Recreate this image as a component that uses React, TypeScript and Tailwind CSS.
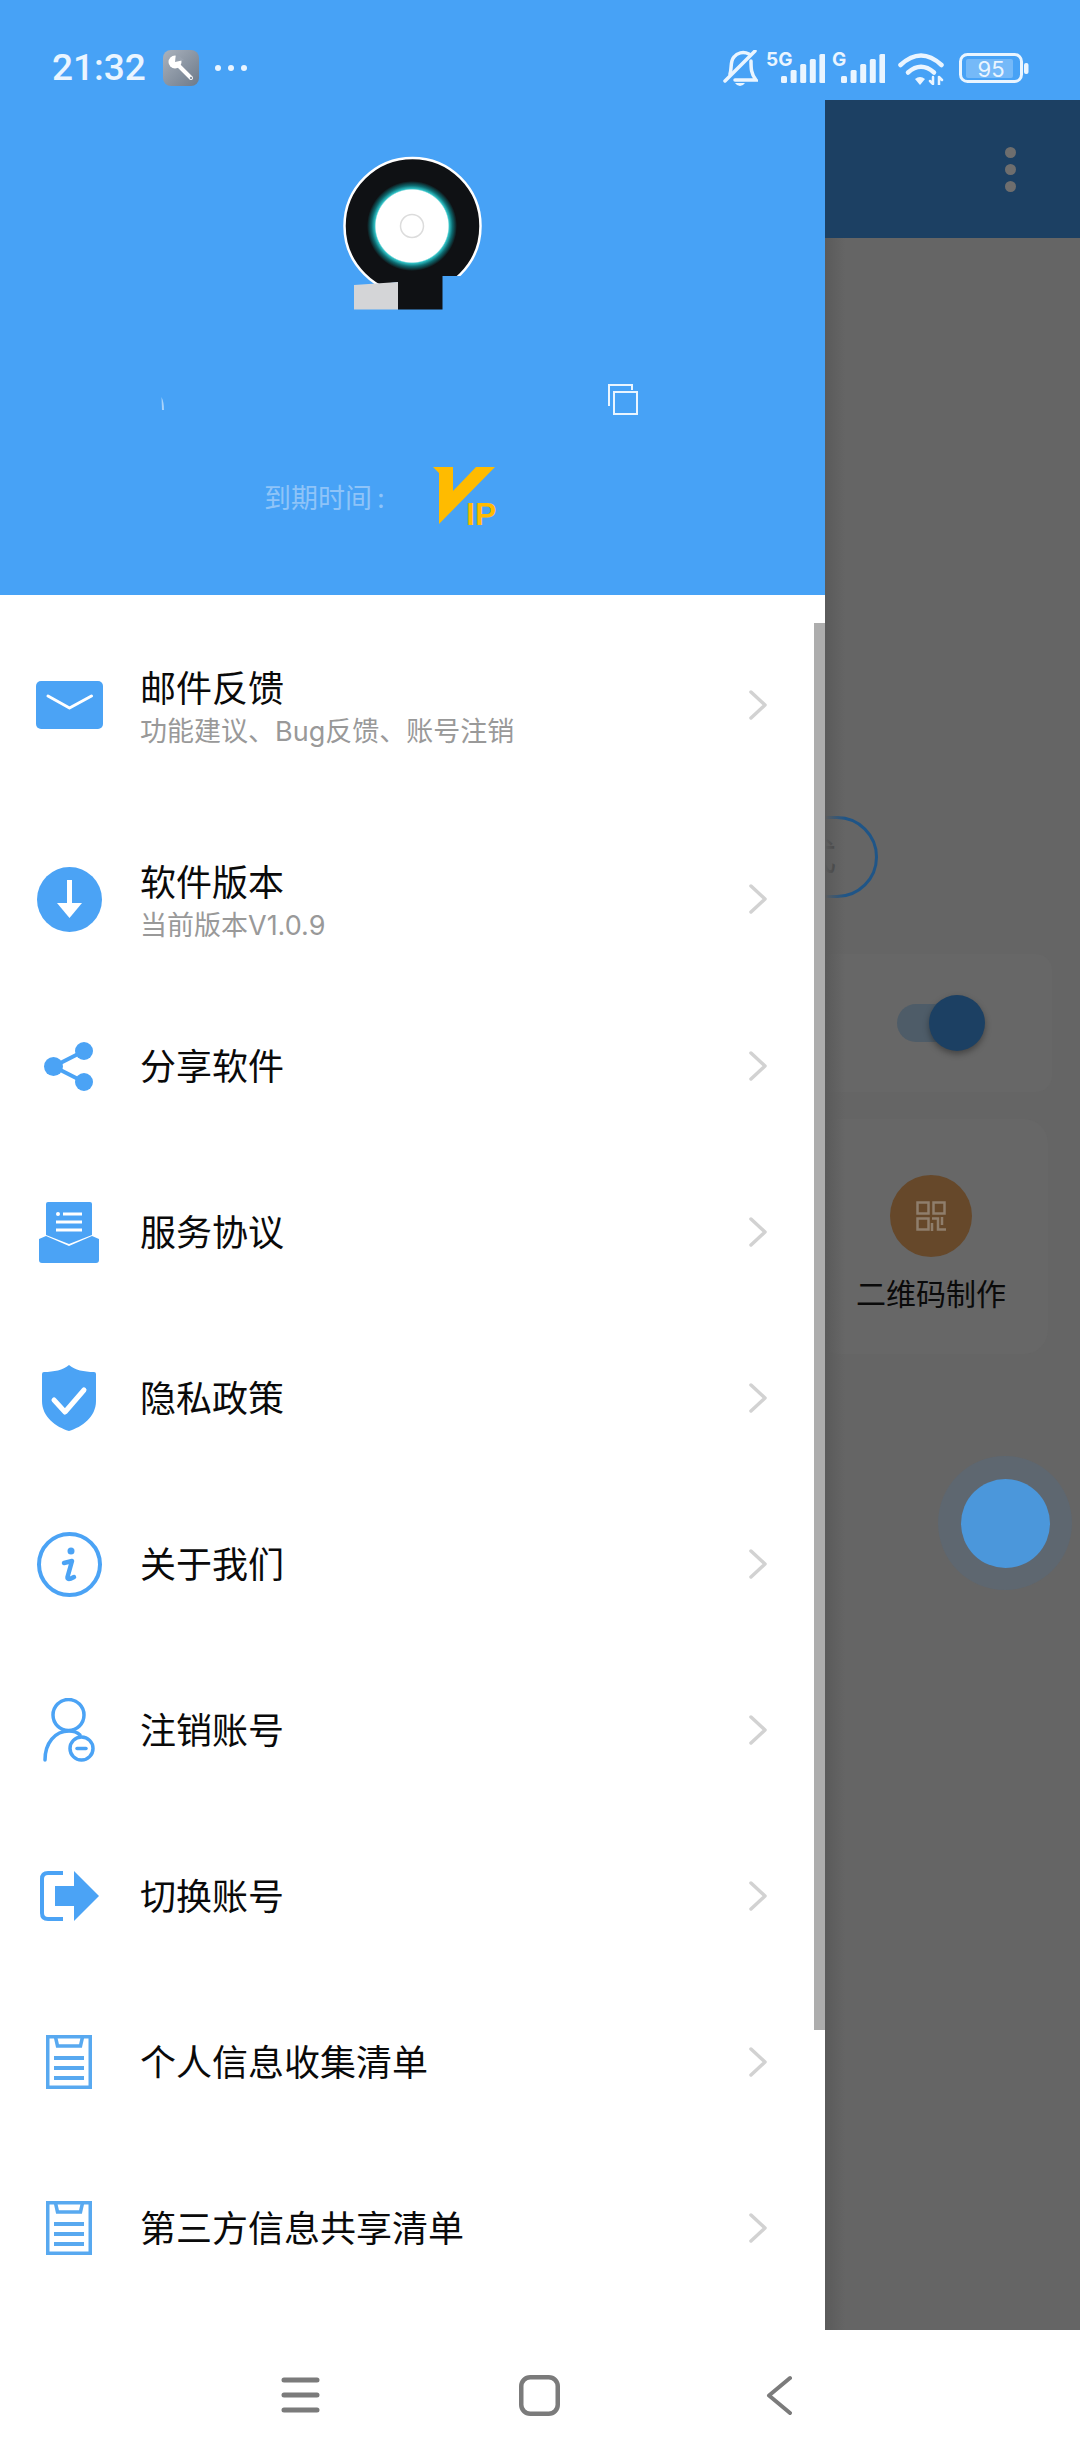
import type { ReactNode } from "react";

const BLUE = "#4BA3F5";

function MailIcon() {
  return (
    <svg width="67" height="48" viewBox="0 0 67 48">
      <rect width="67" height="48" rx="5" fill={BLUE} />
      <path d="M12 15 L33.5 27 L55.5 15" fill="none" stroke="#fff" strokeWidth="3" strokeLinecap="round" strokeLinejoin="round" />
    </svg>
  );
}

function DownloadIcon() {
  return (
    <svg width="65" height="65" viewBox="0 0 65 65">
      <circle cx="32.5" cy="32.5" r="32.5" fill={BLUE} />
      <rect x="30" y="13" width="5" height="24" fill="#fff" />
      <path d="M20 36 H45 L32.5 51 Z" fill="#fff" />
    </svg>
  );
}

function ShareIcon() {
  return (
    <svg width="50" height="49" viewBox="0 0 50 49">
      <path d="M9.5 24.5 L40 9 M9.5 24.5 L40 40" stroke={BLUE} strokeWidth="4" fill="none" />
      <circle cx="9.5" cy="24.5" r="9.5" fill={BLUE} />
      <circle cx="40" cy="9" r="9" fill={BLUE} />
      <circle cx="40" cy="40" r="9" fill={BLUE} />
    </svg>
  );
}

function DocIcon() {
  return (
    <svg width="60" height="61" viewBox="0 0 60 61">
      <path d="M9 0 H51 Q53 0 53 2 V33 L30 42 L7 33 V2 Q7 0 9 0 Z" fill={BLUE} />
      <path d="M0 37 L7 34 L30 44 L53 34 L60 37 V58 Q60 61 57 61 H3 Q0 61 0 58 Z" fill={BLUE} />
      <circle cx="19" cy="12" r="2" fill="#fff" />
      <path d="M24 12 H43 M17 20 H43 M17 28 H43" stroke="#fff" strokeWidth="3" />
    </svg>
  );
}

function ShieldIcon() {
  return (
    <svg width="54" height="66" viewBox="0 0 54 66">
      <path d="M27 0 C33 5 42 7 52 7 Q54 7 54 9 L54 36 C54 52 40 62 27 66 C14 62 0 52 0 36 L0 9 Q0 7 2 7 C12 7 21 5 27 0 Z" fill={BLUE} />
      <path d="M12 35 L23 47 L42 25" fill="none" stroke="#fff" strokeWidth="5" strokeLinecap="round" strokeLinejoin="round" />
    </svg>
  );
}

function InfoIcon() {
  return (
    <svg width="65" height="65" viewBox="0 0 65 65">
      <circle cx="32.5" cy="32.5" r="30.5" fill="none" stroke={BLUE} strokeWidth="4" />
      <circle cx="34" cy="19" r="3.5" fill={BLUE} />
      <path d="M27 31 L35 29 L30.5 45 Q30 49 37 45" fill="none" stroke={BLUE} strokeWidth="4.5" strokeLinejoin="round" strokeLinecap="round" />
    </svg>
  );
}

function UserMinusIcon() {
  return (
    <svg width="52" height="64" viewBox="0 0 52 64" fill="none" stroke={BLUE} strokeWidth="3.5" strokeLinecap="round">
      <circle cx="25.5" cy="17" r="15.5" />
      <path d="M2 62 C2 45 12 33 26 33 C31 33 34 34 37 37" />
      <circle cx="38.5" cy="50.5" r="11.5" />
      <path d="M34 50.5 H43" />
    </svg>
  );
}

function SwitchIcon() {
  return (
    <svg width="59" height="50" viewBox="0 0 59 50">
      <path d="M23 2 H8 Q2 2 2 8 V42 Q2 48 8 48 H23" fill="none" stroke={BLUE} strokeWidth="4" />
      <path d="M15 15 H34 V0 L59 25 L34 50 V35 H15 Z" fill={BLUE} />
    </svg>
  );
}

function ListIcon() {
  return (
    <svg width="46" height="54" viewBox="0 0 46 54" fill="none" stroke="#58A9F0">
      <rect x="1.75" y="1.75" width="42.5" height="50.5" strokeWidth="3.5" />
      <path d="M9.5 2 L11.5 11 H34.5 L36.5 2" strokeWidth="3.5" />
      <path d="M8 23 H38 M8 33 H38 M8 43 H38" strokeWidth="4" />
    </svg>
  );
}

function Chevron() {
  return (
    <svg width="18" height="30" viewBox="0 0 18 30" className="shrink-0">
      <path d="M2 2 L16 15 L2 28" fill="none" stroke="#D2D2D2" strokeWidth="3.5" strokeLinecap="round" strokeLinejoin="round" />
    </svg>
  );
}

function WrenchBadge() {
  return (
    <div className="flex h-9 w-9 items-center justify-center rounded-lg bg-linear-to-br from-[#aab2bd] to-[#6d7a8a]">
      <svg width="28" height="28" viewBox="0 0 28 28">
        <path d="M12 12 L24 24" stroke="#fff" strokeWidth="4" strokeLinecap="round" />
        <circle cx="8" cy="8" r="6.5" fill="#fff" />
        <path d="M8 8 L9 -1 L17 6 Z" fill="#98a2af" />
        <circle cx="24" cy="24" r="1.2" fill="#8b95a2" />
      </svg>
    </div>
  );
}

function BellOff() {
  return (
    <svg width="35" height="37" viewBox="0 0 35 37" fill="none" stroke="#EAF5FF" strokeWidth="3.5" strokeLinecap="round">
      <path d="M7 24 C9 18 7 11 11 7 C14 3 20 1 26 4" />
      <path d="M28 11 C28 18 28 24 33 30 H12" />
      <path d="M32 1 L2 31" />
      <path d="M12 33 H22 Q20 36 17 36 Q14 36 12 33 Z" fill="#EAF5FF" stroke="none" />
    </svg>
  );
}

function SignalBars({ label, wrapClass, barsClass }: { label: string; wrapClass: string; barsClass: string }) {
  return (
    <div className={`relative flex h-[31px] items-end ${wrapClass}`}>
      <span className="absolute left-0 top-[-2px] text-[19px] font-bold leading-none text-[#EAF5FF]">{label}</span>
      <svg width="44" height="29" viewBox="0 0 44 29" className={barsClass}>
        {[7, 13, 19, 24, 29].map((h, i) => (
          <rect key={i} x={i * 9.6} y={29 - h} width="6" height={h} rx="1.5" fill="#EAF5FF" />
        ))}
      </svg>
    </div>
  );
}

function Wifi() {
  return (
    <svg width="46" height="33" viewBox="0 0 46 33" fill="none" stroke="#EAF5FF" strokeLinecap="round">
      <path d="M2.5 13 Q23 -6 43.5 13" strokeWidth="4.5" />
      <path d="M10 20.5 Q23 9 36 20.5" strokeWidth="4.5" />
      <path d="M17 27 L22 33 L27 27 Q22 23 17 27 Z" fill="#EAF5FF" stroke="none" />
      <path d="M35 25 V32 M32 29 L35 32 M41 33 V25 M41 25 L44 28" strokeWidth="2.5" />
    </svg>
  );
}

function Battery() {
  return (
    <div className="relative h-[30px] w-[70px]">
      <svg width="70" height="30" viewBox="0 0 70 30">
        <rect x="1.5" y="1.5" width="61" height="27" rx="7" fill="none" stroke="#EAF5FF" strokeWidth="3" />
        <rect x="7" y="6" width="47" height="19" rx="2" fill="#fff" fillOpacity="0.25" />
        <rect x="65" y="10" width="4.5" height="11" rx="2" fill="#EAF5FF" />
      </svg>
      <span className="absolute left-0 top-[5px] w-[64px] text-center text-[22px] leading-[22px] text-[#EAF5FF]">95</span>
    </div>
  );
}

function Avatar() {
  return (
    <svg width="145" height="155" viewBox="0 0 145 155" className="shrink-0">
      <defs>
        <radialGradient id="discGlow">
          <stop offset="0.8" stopColor="#ffffff" />
          <stop offset="0.83" stopColor="#2fc0c4" />
          <stop offset="0.9" stopColor="#0d6a70" />
          <stop offset="1" stopColor="#0f1114" />
        </radialGradient>
      </defs>
      <circle cx="72.5" cy="71" r="68" fill="#0f1114" stroke="#fff" strokeWidth="2.5" />
      <circle cx="72" cy="71" r="45" fill="url(#discGlow)" />
      <circle cx="72" cy="71" r="11.5" fill="none" stroke="#dcdcdc" strokeWidth="1.5" />
      <path d="M0 130 L35 130 L58 127 V155 H0 Z M102 121 H145 V155 H102 Z" fill="#47A2F6" />
      <rect x="58" y="121" width="44.5" height="33.5" fill="#0f1114" />
      <path d="M14 130 L58 127 V154.5 H14 Z" fill="#d4d5d7" />
    </svg>
  );
}

function VipLogo() {
  return (
    <div className="relative h-[58px] w-[64px] shrink-0">
      <svg width="64" height="58" viewBox="0 0 64 58">
        <path d="M0 0 H20 V24 L43 0 H62 L6 57 V6 Z" fill="#FFBB00" />
      </svg>
      <span className="absolute left-[33px] top-[31px] font-['Liberation_Sans',sans-serif] text-[32px] font-bold leading-none text-[#FFBB00]">
        IP
      </span>
    </div>
  );
}

const rows: { icon: ReactNode; title: string; sub?: string; rowClass: string }[] = [
  { icon: <MailIcon />, title: "邮件反馈", sub: "功能建议、Bug反馈、账号注销", rowClass: "h-[220px]" },
  { icon: <DownloadIcon />, title: "软件版本", sub: "当前版本V1.0.9", rowClass: "h-[168px]" },
  { icon: <ShareIcon />, title: "分享软件", rowClass: "h-[166px]" },
  { icon: <DocIcon />, title: "服务协议", rowClass: "h-[166px]" },
  { icon: <ShieldIcon />, title: "隐私政策", rowClass: "h-[166px]" },
  { icon: <InfoIcon />, title: "关于我们", rowClass: "h-[166px]" },
  { icon: <UserMinusIcon />, title: "注销账号", rowClass: "h-[166px]" },
  { icon: <SwitchIcon />, title: "切换账号", rowClass: "h-[166px]" },
  { icon: <ListIcon />, title: "个人信息收集清单", rowClass: "h-[166px]" },
  { icon: <ListIcon />, title: "第三方信息共享清单", rowClass: "h-[166px]" },
];

export default function App() {
  return (
    <div className="flex h-[2460px] w-[1080px] flex-col overflow-hidden bg-white font-['Inter','Noto_Sans_CJK_SC',sans-serif]">
      {/* status bar */}
      <div className="flex h-[100px] shrink-0 items-start justify-between bg-[#47A2F6] pl-[52px] pr-[51px]">
        <div className="flex items-center pt-[50px]">
          <span className="w-[111px] font-['Roboto',sans-serif] text-[37px] font-medium leading-9 text-[#EAF5FF]">21:32</span>
          <WrenchBadge />
          <div className="ml-4 flex gap-[7px]">
            <span className="h-[6px] w-[6px] rounded-full bg-[#EAF5FF]" />
            <span className="h-[6px] w-[6px] rounded-full bg-[#EAF5FF]" />
            <span className="h-[6px] w-[6px] rounded-full bg-[#EAF5FF]" />
          </div>
        </div>
        <div className="flex items-start pt-[50px]">
          <BellOff />
          <div className="ml-[8px] mt-[2px]">
            <SignalBars label="5G" wrapClass="w-[59px]" barsClass="ml-[15px]" />
          </div>
          <div className="ml-[7px] mt-[2px]">
            <SignalBars label="G" wrapClass="w-[53px]" barsClass="ml-[9px]" />
          </div>
          <div className="ml-[13px] mt-[2px]">
            <Wifi />
          </div>
          <div className="ml-[15px] mt-[3px]">
            <Battery />
          </div>
        </div>
      </div>

      <div className="flex min-h-0 flex-1">
        {/* drawer */}
        <div className="relative w-[825px] shrink-0 bg-white">
          <div className="flex h-[495px] flex-col items-center bg-[#47A2F6] pt-[55px]">
            <Avatar />
            <div className="mt-[74px] flex h-[31px] w-full items-end justify-between pl-[161px] pr-[187px]">
              <svg width="4" height="13" viewBox="0 0 4 13" className="mb-[5px]">
                <path d="M0.5 0 Q3 5 3 13 H1 Z" fill="#A9D3FA" />
              </svg>
              <svg width="31" height="31" viewBox="0 0 31 31" fill="none" stroke="#EAF5FF" strokeWidth="2">
                <path d="M2 22 V1 H25 V6" />
                <rect x="7" y="8" width="23" height="22" />
              </svg>
            </div>
            <div className="mt-[52px] flex w-full items-center pl-[264px]">
              <span className="w-[169px] pt-[6px] text-[27px] leading-9 text-[#8FC4F8]">到期时间{"\u2009"}:</span>
              <VipLogo />
            </div>
          </div>

          {rows.map((row) => (
            <div key={row.title} className={`flex items-center pl-[34px] pr-[58px] ${row.rowClass}`}>
              <div className="flex w-[70px] shrink-0 justify-center">{row.icon}</div>
              <div className={`ml-[36px] flex-1 ${row.sub ? "pt-[10px]" : "pt-[2px]"}`}>
                <div className="text-[36px] leading-[44px] text-[#0a0a0a]">{row.title}</div>
                {row.sub && <div className="text-[27px] leading-[42px] text-[#999999]">{row.sub}</div>}
              </div>
              <Chevron />
            </div>
          ))}

          {/* scrollbar thumb */}
          <div className="absolute right-0 top-[523px] h-[1407px] w-[11px] bg-[#ADADAD]" />
        </div>

        {/* page behind the drawer, dimmed */}
        <div className="relative flex-1 overflow-hidden bg-[#656565]">
          <div className="flex h-[138px] items-center justify-end bg-[#1C4063] pr-[64px]">
            <div className="flex flex-col gap-[6px]">
              <span className="h-[11px] w-[11px] rounded-full bg-[#6E6E6E]" />
              <span className="h-[11px] w-[11px] rounded-full bg-[#6E6E6E]" />
              <span className="h-[11px] w-[11px] rounded-full bg-[#6E6E6E]" />
            </div>
          </div>

          <div className="ml-[-100px] mt-[578px] flex h-[82px] w-[153px] items-center justify-end rounded-full border-[3px] border-[#1F5587] pr-[39px] text-[36px] leading-none text-[#3a3a3a]">
            式
          </div>

          <div className="mt-[56px] flex h-[138px] w-[227px] items-center rounded-r-2xl bg-[#676767] pl-[72px]">
            <div className="relative h-[38px] w-[60px] rounded-full bg-[#4E5C68]">
              <div className="absolute left-[32px] top-[-9px] h-14 w-14 rounded-full bg-[#1C4063] shadow-[0_3px_6px_rgba(0,0,0,0.35)]" />
            </div>
          </div>

          <div className="ml-[-11px] mt-[27px] flex h-[235px] w-[234px] flex-col items-center rounded-3xl bg-[#676767] pt-[56px]">
            <div className="flex h-[82px] w-[82px] items-center justify-center rounded-full bg-[#66482A]">
              <svg width="30" height="30" viewBox="0 0 30 30" fill="none" stroke="#8F7E6C" strokeWidth="2.5">
                <rect x="1.5" y="1.5" width="11" height="11" />
                <rect x="17.5" y="1.5" width="11" height="11" />
                <rect x="1.5" y="17.5" width="11" height="11" />
                <path d="M16 17.5 H22 V28.5 H30 M26 16 V24 M16 22 V30" />
              </svg>
            </div>
            <div className="mt-[17px] text-[30px] leading-10 text-[#0a0a0a]">二维码制作</div>
          </div>

          {/* floating button */}
          <div className="absolute left-[113px] top-[1356px] flex h-[134px] w-[134px] items-center justify-center rounded-full bg-[#5E6770]">
            <div className="h-[89px] w-[89px] rounded-full bg-[#4B97DB]" />
          </div>

          {/* drawer edge shadow */}
          <div className="absolute bottom-0 left-0 top-[138px] w-5 bg-linear-to-r from-[#5a5a5a] to-transparent" />
        </div>
      </div>

      {/* navigation bar */}
      <div className="flex h-[130px] shrink-0 items-center bg-white pl-[281px]">
        <svg width="39" height="36" viewBox="0 0 39 36" stroke="#7B7B7B" strokeWidth="5" strokeLinecap="round">
          <path d="M3 3 H36 M3 18 H36 M3 33 H36" />
        </svg>
        <svg width="41" height="41" viewBox="0 0 41 41" fill="none" stroke="#7B7B7B" strokeWidth="4.5" className="ml-[199px]">
          <rect x="2.25" y="2.25" width="36.5" height="36.5" rx="9" />
        </svg>
        <svg width="26" height="41" viewBox="0 0 26 41" fill="none" stroke="#7B7B7B" strokeWidth="4" strokeLinecap="round" strokeLinejoin="round" className="ml-[206px]">
          <path d="M24 3 L3 20.5 L24 38" />
        </svg>
      </div>
    </div>
  );
}
